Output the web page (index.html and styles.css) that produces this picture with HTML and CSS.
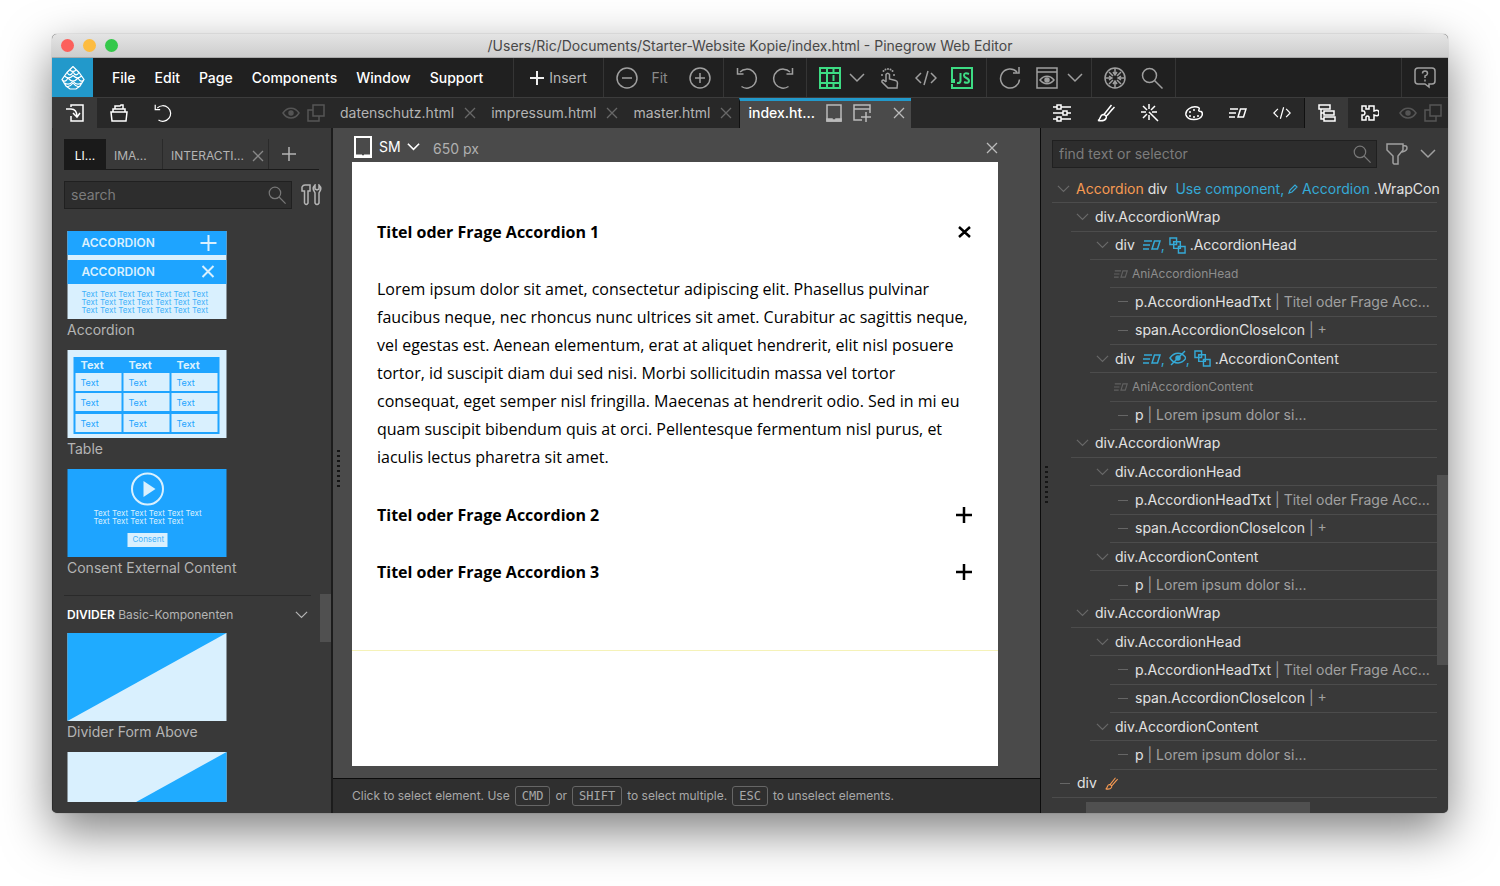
FILE: index.html
```html
<!DOCTYPE html>
<html lang="en">
<head>
<meta charset="utf-8">
<title>Pinegrow Web Editor</title>
<link rel="stylesheet" href="styles.css">
</head>
<body>
<svg class="sprite" aria-hidden="true">
  <symbol id="i-x" viewBox="0 0 12 12"><path d="M1 1l10 10M11 1L1 11"/></symbol>
  <symbol id="i-plus" viewBox="0 0 14 14"><path d="M7 0v14M0 7h14"/></symbol>
  <symbol id="i-chev" viewBox="0 0 16 10"><path d="M1 1l7 7 7-7"/></symbol>
  <symbol id="i-search" viewBox="0 0 22 22"><circle cx="8.500" cy="8.500" r="7"/><path d="M13.500 13.500l8 8"/></symbol>
  <symbol id="i-eye" viewBox="0 0 18 12"><path d="M1 6c4-6.500 12-6.500 16 0c-4 6.500-12 6.500-16 0z"/><circle cx="9" cy="6" r="2" fill="currentColor"/></symbol>
  <symbol id="i-copies" viewBox="0 0 18 18"><path d="M6 1h11v11H6zM6 6H1v11h11v-5"/></symbol>
  <symbol id="i-code" viewBox="0 0 22 16"><path d="M6 3L1 8l5 5M16 3l5 5-5 5M13 1L9 15"/></symbol>
  <symbol id="i-anim" viewBox="0 0 18 10"><path d="M1 1h8M0 5h7M0 9h6M11.500 1H17l-2.500 8H9z"/></symbol>
  <symbol id="i-cls" viewBox="0 0 18 18"><path d="M1 1h7v7H1zM5 5h7v7H5zM10 10h7v7h-7z"/></symbol>
  <symbol id="i-brush" viewBox="0 0 18 18"><path d="M1 16.500c3-1 1.500-5.500 5-6c2.500 0 4 2 3 4c-1.500 2.500-5 2.500-8 2zM7 10.500L14.500 1M9 12.500L17.500 3M10.500 11l5-6"/></symbol>
  <symbol id="i-undo" viewBox="0 0 22 22"><path d="M4 5a9.500 9.500 0 1 1 1.500 14.500M1.500 1v6h6"/></symbol>
</svg>

<div class="window">
  <header class="titlebar">
    <div class="lights"><i class="red"></i><i class="yellow"></i><i class="green"></i></div>
    <h1>/Users/Ric/Documents/Starter-Website Kopie/index.html - Pinegrow Web Editor</h1>
  </header>

  <div class="toolbar">
    <div class="logo"><svg class="s24" viewBox="0 0 24 24"><path d="M12 .500L6 6.500l-5 7L5 20l4 3h6l4-3 4-6.500-5-7zM9 4q3 3 6 0M6 6.500q3 5 6-.500q3 5.500 6 .500M3.500 10q4 4 8.500-.500q4.500 4.500 8.500.500M1 13.500q3 4 6-1.500q5 6 10 0q3 5.500 6 1.500M3.500 17q5 3 8.500-2q3.500 5 8.500 2M6 21q4-1 6-4q2 3 6 4"/></svg></div>
    <nav class="group menu">
      <button>File</button><button>Edit</button><button>Page</button><button>Components</button><button>Window</button><button>Support</button>
    </nav>
    <div class="group insert"><button><svg class="s14 thick"><use href="#i-plus"/></svg>Insert</button></div>
    <div class="group zoom">
      <button aria-label="Zoom out"><svg class="s22"><circle cx="11" cy="11" r="10"/><path d="M6 11h10"/></svg></button>
      <button class="fit">Fit</button>
      <button aria-label="Zoom in"><svg class="s22"><circle cx="11" cy="11" r="10"/><path d="M6 11h10M11 6v10"/></svg></button>
    </div>
    <div class="group history">
      <button aria-label="Undo"><svg class="s22"><use href="#i-undo"/></svg></button>
      <button aria-label="Redo"><svg class="s22"><path d="M18 5a9.500 9.500 0 1 0-1.500 14.500M20.500 1v6h-6"/></svg></button>
    </div>
    <div class="group view">
      <button class="accent" aria-label="Grid"><svg class="s22 thick"><path d="M1 1h20v20H1zM8 1v20M14.500 1v4M14.500 8v6M14.500 17v4M1 6h7M1 16h7M8 6h13M8 16h13"/></svg></button>
      <button class="more" aria-label="Grid options"><svg class="chev"><use href="#i-chev"/></svg></button>
      <button aria-label="Interact"><svg class="s22"><path d="M7 15V7.500q1.500-2.500 3.500 0V12l6 1.500q2 .500 2 2.500l-.500 5H9l-6-6q-.500-2 1.500-2L7 15"/><path class="dots" d="M9 2v.1M4.500 4v.1M13.500 4v.1M3 8v.1M15 8v.1M6.500 2.500v.1M11.500 2.500v.1"/></svg></button>
      <button aria-label="Code"><svg class="s22 code"><use href="#i-code"/></svg></button>
      <button class="accent" aria-label="JavaScript"><svg class="s22 thick"><path d="M1 12V1h20v20H1v-4M9.500 6v8q-.500 2.500-3.500 2M18 7q-5-2-5 1.500c0 3 5 2 5 5.500q-.500 3-5 1"/><rect x="0" y="12" width="4" height="4" fill="currentColor" stroke="none"/></svg></button>
    </div>
    <div class="group preview">
      <button aria-label="Reload"><svg class="s22"><path d="M18 5a9.500 9.500 0 1 0 2.500 7.500M20 0v6h-6"/></svg></button>
      <button aria-label="Preview"><svg class="s22"><path d="M1 1h20v20H1zM1 5h20M4 13c4-5 10-5 14 0c-4 5-10 5-14 0z"/><circle cx="11" cy="13" r="2" fill="currentColor"/></svg></button>
      <button class="more" aria-label="Preview options"><svg class="chev"><use href="#i-chev"/></svg></button>
    </div>
    <div class="group find">
      <button aria-label="Optimize"><svg class="s22"><circle cx="11" cy="11" r="10"/><path d="M11 1v7M11 14v7M1 11h7M14 11h7M9 5l2 3 2-3M9 17l2-3 2 3M5 9l3 2-3 2M17 9l-3 2 3 2M5 5l4 4M17 5l-4 4M5 17l4-4M17 17l-4-4"/></svg></button>
      <button aria-label="Find"><svg class="s22"><use href="#i-search"/></svg></button>
    </div>
    <div class="group help"><button aria-label="Help"><svg class="s22"><path d="M4 1h14q3 0 3 3v10q0 3-3 3h-3v3l-4-3H4q-3 0-3-3V4q0-3 3-3zM8.500 6.500q0-2.500 2.500-2.500t2.500 2.500q0 1.500-2.500 2.500v2M11 12.500v2"/></svg></button></div>
  </div>

  <div class="tabrow">
    <div class="paneltabs left">
      <button class="on" aria-label="Library"><svg class="s18"><path d="M5 3V1h12v16H5v-5M0 5h5q6 0 6 8M7 9l4 4 3-4"/></svg></button>
      <button aria-label="Project"><svg class="s18"><path d="M1 8h16l-1 9H2zM3 8V5h12v3M5 5V2h5l1-1h2v4"/></svg></button>
      <button aria-label="Undo history"><svg class="s18" viewBox="0 0 22 22"><use href="#i-undo"/></svg></button>
      <span class="ghost"><svg class="eye"><use href="#i-eye"/></svg><svg class="s18"><use href="#i-copies"/></svg></span>
    </div>
    <div class="filetabs">
      <div class="filetab"><button>datenschutz.html</button><button aria-label="Close"><svg class="s10"><use href="#i-x" /></svg></button></div>
      <div class="filetab"><button>impressum.html</button><button aria-label="Close"><svg class="s10"><use href="#i-x"/></svg></button></div>
      <div class="filetab"><button>master.html</button><button aria-label="Close"><svg class="s10"><use href="#i-x"/></svg></button></div>
      <div class="filetab current"><button>index.ht...</button>
        <button class="device" aria-label="Device"><svg class="s18"><path d="M2 1h14v16H2z"/><path d="M2 15h5v1h4v-1h5v2H2z" fill="currentColor"/></svg></button>
        <button aria-label="New window"><svg class="s18"><path d="M9 16H1V1h16v8M1 5h16M13 8v10M8 13h10"/></svg></button>
        <button class="end" aria-label="Close"><svg class="s10"><use href="#i-x"/></svg></button></div>
    </div>
    <div class="paneltabs right">
      <button aria-label="Properties"><svg class="s18"><path d="M0 3h4M8 3h10M4 1h4v4H4zM0 9h10M14 9h4M10 7h4v4h-4zM0 15h4M8 15h10M4 13h4v4H4z"/></svg></button>
      <button aria-label="Styles"><svg class="s18"><use href="#i-brush"/></svg></button>
      <button aria-label="Visual"><svg class="s18"><path d="M8 8l9 9M8 0v5M8 11v5M0 8h5M11 8h5M2 2l4 4M14 2l-4 4M2 14l4-4"/></svg></button>
      <button aria-label="Colors"><svg class="s18"><path d="M1 11c-1-5 5-9 11-8q3 .500 2 2.500q-1 2 2 2q2 1 1 4c-2 5-14 6-16-.500z"/><path class="dots" d="M5 8v.1M9 6v.1M5 12v.1M9 13v.1M13 12v.1"/></svg></button>
      <button aria-label="Interactions"><svg class="anim"><use href="#i-anim"/></svg></button>
      <button aria-label="Code"><svg class="s18" viewBox="0 -3 22 22"><use href="#i-code" width="22" height="16"/></svg></button>
      <button class="on" aria-label="Tree"><svg class="s18"><path d="M1 1h11v4H1zM6 7h10v4H6zM6 13h11v4H6zM3 5v10h3M3 9h3"/></svg></button>
      <button aria-label="Components"><svg class="s18"><path d="M1 2h4v3h3V2h5v5q5-2 5 2t-5 2v5H8v-3q-1.500-2-3 0v3H1v-5h2q2-2 0-4H1z"/></svg></button>
      <span class="ghost"><svg class="eye"><use href="#i-eye"/></svg><svg class="s18"><use href="#i-copies"/></svg></span>
    </div>
  </div>

  <main class="work">
    <aside class="library">
      <div class="libtabs">
        <button class="on">LI...</button><button class="ima">IMA...</button><button class="inter">INTERACTI...</button><button class="shut" aria-label="Close"><svg class="s10"><use href="#i-x"/></svg></button><button class="add" aria-label="Add"><svg class="s14"><use href="#i-plus"/></svg></button>
      </div>
      <div class="searchrow">
        <label class="field"><input type="text" placeholder="search" aria-label="Search library"><svg class="s18" viewBox="0 0 22 22"><use href="#i-search"/></svg></label>
        <button aria-label="Tools"><svg class="s22"><path d="M3 7H1V3q1-2 3-2h5v6H7v12q-2 3-3.500 0V7zM14 1q-3 3-1 6l1 2v10q2 3 4 0V9l1-2q2-3-1-6v4l-2 1-2-1z"/></svg></button>
      </div>
      <div class="scroller">
        <figure>
          <svg class="thumb" viewBox="0 0 159 88"><rect width="159" height="88" fill="#d9f0fe"/><path d="M0 0h159v24H0zM0 29h159v24H0z" fill="#1ea4ff"/><path class="ink" d="M141 4v16M133 12h16M135 35l11 11M146 35l-11 11"/>
            <g class="thead caps"><text x="14" y="16">ACCORDION</text><text x="14" y="45">ACCORDION</text></g>
            <g class="tiny"><text x="14" y="66">Text Text Text Text Text Text Text</text><text x="14" y="74">Text Text Text Text Text Text Text</text><text x="14" y="82">Text Text Text Text Text Text Text</text></g></svg>
          <figcaption>Accordion</figcaption>
        </figure>
        <figure>
          <svg class="thumb" viewBox="0 0 159 88"><rect width="159" height="88" fill="#d9f0fe"/><path d="M6 7h146v77H6z" fill="#1ea4ff"/><path d="M8 23h46v18H8zM56 23h46v18H56zM104 23h46v18h-46zM8 43h46v18H8zM56 43h46v18H56zM104 43h46v18h-46zM8 64h46v18H8zM56 64h46v18H56zM104 64h46v18h-46z" fill="#d9f0fe"/>
            <g class="thead"><text x="13" y="19">Text</text><text x="61" y="19">Text</text><text x="109" y="19">Text</text></g>
            <g class="cell"><text x="13" y="36">Text</text><text x="61" y="36">Text</text><text x="109" y="36">Text</text><text x="13" y="56">Text</text><text x="61" y="56">Text</text><text x="109" y="56">Text</text><text x="13" y="77">Text</text><text x="61" y="77">Text</text><text x="109" y="77">Text</text></g></svg>
          <figcaption>Table</figcaption>
        </figure>
        <figure>
          <svg class="thumb" viewBox="0 0 159 88"><rect width="159" height="88" fill="#1ea4ff"/><circle class="ink" cx="80" cy="20" r="15.500"/><path d="M76 12l12 8-12 8z" fill="#d9f0fe"/><rect x="60" y="64" width="40" height="14" fill="#d9f0fe"/>
            <g class="tiny light"><text x="26" y="47">Text Text Text Text Text Text</text><text x="26" y="55">Text Text Text Text Text</text></g><g class="tiny"><text x="65" y="73">Consent</text></g></svg>
          <figcaption>Consent External Content</figcaption>
        </figure>
        <div class="section"><h2><b>DIVIDER</b> Basic-Komponenten</h2><button aria-label="Collapse"><svg class="chev sm"><use href="#i-chev"/></svg></button></div>
        <figure>
          <svg class="thumb" viewBox="0 0 159 88"><rect width="159" height="88" fill="#d9f0fe"/><path d="M0 0h159L0 88z" fill="#1fabff"/></svg>
          <figcaption>Divider Form Above</figcaption>
        </figure>
        <figure>
          <svg class="thumb" viewBox="0 0 159 88"><rect width="159" height="88" fill="#d9f0fe"/><path d="M159 0v88H0z" fill="#1fabff"/></svg>
        </figure>
      </div>
      <i class="vbar"></i>
    </aside>

    <section class="stage">
      <div class="stagehead">
        <svg class="tablet"><path d="M1 1h16v20H1z"/><path d="M1 19h7v1h2v-1h7v2H1z" fill="currentColor" stroke-width="1"/></svg>
        <label class="size"><select aria-label="Breakpoint"><option>SM</option></select><svg class="chev sm thick"><use href="#i-chev"/></svg></label>
        <span class="px">650 px</span>
        <button aria-label="Close preview"><svg class="s10"><use href="#i-x"/></svg></button>
      </div>
      <article class="page">
        <div class="accordion">
          <button class="head">Titel oder Frage Accordion 1<svg class="toggle"><path d="M3 3l11 10M14 3L3 13"/></svg></button>
          <p>Lorem ipsum dolor sit amet, consectetur adipiscing elit. Phasellus pulvinar faucibus neque, nec rhoncus nunc ultrices sit amet. Curabitur ac sagittis neque, vel egestas est. Aenean elementum, erat at aliquet hendrerit, elit nisl posuere tortor, id suscipit diam dui sed nisi. Morbi sollicitudin massa vel tortor consequat, eget semper nisl fringilla. Maecenas at hendrerit odio. Sed in mi eu quam suscipit bibendum quis at orci. Pellentesque fermentum nisl purus, et iaculis lectus pharetra sit amet.</p>
          <button class="head">Titel oder Frage Accordion 2<svg class="toggle"><path d="M8 0v16M0 8h16"/></svg></button>
          <button class="head">Titel oder Frage Accordion 3<svg class="toggle"><path d="M8 0v16M0 8h16"/></svg></button>
        </div>
      </article>
      <footer class="status">Click to select element. Use <kbd>CMD</kbd> or <kbd>SHIFT</kbd> to select multiple. <kbd>ESC</kbd> to unselect elements.</footer>
      <i class="grip"></i>
    </section>

    <aside class="tree">
      <div class="searchrow">
        <label class="field"><input type="text" placeholder="find text or selector" aria-label="Find text or selector"><svg class="s18" viewBox="0 0 22 22"><use href="#i-search"/></svg></label>
        <button aria-label="Filter"><svg class="s22"><path d="M1 1h16v6l-5 6v8H8l-1-1v-7L1 7zM17 3q4-1 4 2t-5 4"/></svg></button>
        <button aria-label="More"><svg class="chev"><use href="#i-chev"/></svg></button>
      </div>
      <ul class="nodes">
        <li class="l0"><svg class="tog"><use href="#i-chev"/></svg><span class="orange">Accordion</span>&nbsp;div&nbsp; <span class="blue">Use component, <svg class="pencil"><path d="M1 9l1-3 5-5 2 2-5 5z"/></svg> Accordion</span>&nbsp;.WrapCon</li>
        <li class="l1"><svg class="tog"><use href="#i-chev"/></svg>div.AccordionWrap</li>
        <li class="l2"><svg class="tog"><use href="#i-chev"/></svg>div&nbsp; <span class="blue"><svg class="anim"><use href="#i-anim"/></svg>, <svg class="cls"><use href="#i-cls"/></svg></span>&nbsp;.AccordionHead</li>
        <li class="l3 ani"><svg class="anim"><use href="#i-anim"/></svg>AniAccordionHead</li>
        <li class="l3"><i class="dash"></i>p.AccordionHeadTxt<span class="dim">&nbsp;| Titel oder Frage Acc...</span></li>
        <li class="l3"><i class="dash"></i>span.AccordionCloseIcon<span class="dim">&nbsp;| +</span></li>
        <li class="l2"><svg class="tog"><use href="#i-chev"/></svg>div&nbsp; <span class="blue"><svg class="anim"><use href="#i-anim"/></svg>, <svg class="eyeoff"><use href="#i-eye" y="2" width="18" height="12"/><path d="M2 15L16 1"/></svg>, <svg class="cls"><use href="#i-cls"/></svg></span>&nbsp;.AccordionContent</li>
        <li class="l3 ani"><svg class="anim"><use href="#i-anim"/></svg>AniAccordionContent</li>
        <li class="l3"><i class="dash"></i>p<span class="dim">&nbsp;| Lorem ipsum dolor si...</span></li>
        <li class="l1"><svg class="tog"><use href="#i-chev"/></svg>div.AccordionWrap</li>
        <li class="l2"><svg class="tog"><use href="#i-chev"/></svg>div.AccordionHead</li>
        <li class="l3"><i class="dash"></i>p.AccordionHeadTxt<span class="dim">&nbsp;| Titel oder Frage Acc...</span></li>
        <li class="l3"><i class="dash"></i>span.AccordionCloseIcon<span class="dim">&nbsp;| +</span></li>
        <li class="l2"><svg class="tog"><use href="#i-chev"/></svg>div.AccordionContent</li>
        <li class="l3"><i class="dash"></i>p<span class="dim">&nbsp;| Lorem ipsum dolor si...</span></li>
        <li class="l1"><svg class="tog"><use href="#i-chev"/></svg>div.AccordionWrap</li>
        <li class="l2"><svg class="tog"><use href="#i-chev"/></svg>div.AccordionHead</li>
        <li class="l3"><i class="dash"></i>p.AccordionHeadTxt<span class="dim">&nbsp;| Titel oder Frage Acc...</span></li>
        <li class="l3"><i class="dash"></i>span.AccordionCloseIcon<span class="dim">&nbsp;| +</span></li>
        <li class="l2"><svg class="tog"><use href="#i-chev"/></svg>div.AccordionContent</li>
        <li class="l3"><i class="dash"></i>p<span class="dim">&nbsp;| Lorem ipsum dolor si...</span></li>
        <li class="l0"><i class="dash"></i>div&nbsp; <svg class="mini orange" viewBox="0 0 18 18"><use href="#i-brush"/></svg></li>
      </ul>
      <i class="hbar"></i>
      <i class="vbar"></i>
      <i class="grip"></i>
    </aside>
  </main>
</div>
</body>
</html>
```
FILE: styles.css
```css
* { box-sizing: border-box; }
body {
  margin: 0;
  height: 100vh;
  padding: 34px 52px 73px;
  display: flex;
  background: #fff;
  font: 14px/20px Inter, "Liberation Sans", sans-serif;
  color: #b4b4b4;
}
button, input, select { font: inherit; color: inherit; background: none; border: 0; padding: 0; margin: 0; }
button { display: flex; align-items: center; white-space: nowrap; }
svg { display: block; flex: none; fill: none; stroke: currentColor; stroke-width: 1.5; }
.sprite { position: absolute; width: 0; height: 0; }
.thick { stroke-width: 2; }
.dots { stroke-width: 2; stroke-linecap: round; }
.s10 { width: 12px; height: 12px; stroke-width: 1.3; }
.s14 { width: 14px; height: 14px; }
.s18 { width: 18px; height: 18px; }
.s22 { width: 22px; height: 22px; }
.s24 { width: 24px; height: 24px; }
.chev { width: 16px; height: 10px; }
.chev.sm { width: 13px; height: 8px; }
.eye { width: 18px; height: 12px; }
.anim { width: 18px; height: 10px; }

.window {
  flex: 1;
  min-width: 0;
  display: flex;
  flex-direction: column;
  border-radius: 5px;
  overflow: hidden;
  background: #393939;
  box-shadow: 0 0 1px rgba(0,0,0,.5), 0 18px 48px rgba(0,0,0,.5);
}
.titlebar {
  display: grid;
  grid-template-columns: 1fr auto 1fr;
  align-items: center;
  height: 24px;
  padding: 0 9px;
  background: linear-gradient(#e4e4e4, #cdcdcd);
  border-bottom: 1px solid #aaa;
}
.titlebar h1 { margin: 0; font-size: 14px; font-weight: 400; color: #484848; }
.lights { display: flex; gap: 9px; }
.lights i { width: 13px; height: 13px; border-radius: 50%; }
.red { background: #fc605c; }
.yellow { background: #fdbc40; }
.green { background: #34c84a; }

.toolbar { display: flex; height: 40px; background: #202020; border-bottom: 1px solid #3c3c3c; }
.logo { width: 41px; background: #2299cb; color: #fff; display: grid; place-items: center; }
.logo svg { stroke-width: 1.2; }
.group { display: flex; align-items: center; padding: 0 12px; border-right: 1px solid #353535; color: #9f9f9f; }
.menu { width: 421px; padding: 0 19px; gap: 19px; color: #fff; font-weight: 500; }
.insert { width: 90px; justify-content: center; color: #b8b8b8; }
.insert button { gap: 5px; }
.insert svg { color: #eee; }
.zoom { width: 120px; justify-content: space-between; }
.fit { color: #8a8a8a; margin-right: 8px; }
.history { width: 83px; gap: 14px; }
.view { width: 180px; gap: 14px; }
.preview, .find { gap: 15px; }
.preview { width: 105px; }
.find { width: 84px; }
.more { margin-left: -6px; }
.help { margin-left: auto; border-left: 1px solid #353535; border-right: 0; }
.accent { color: #3ddc84; }
.code { padding: 3px 0; }

.tabrow { display: flex; height: 30px; background: #282828; }
.paneltabs { display: flex; color: #fff; }
.paneltabs button { width: 44px; justify-content: center; }
.paneltabs .on { background: #393939; }
.ghost { display: flex; align-items: center; gap: 7px; margin-left: auto; color: #555; }
.left { width: 280px; }
.left button.on { width: 45px; }
.left .ghost { padding-right: 7px; }
.right { width: 408px; }
.right .on { border-left: 1px solid #111; }
.right .ghost { padding-right: 6px; }
.filetabs { flex: 1; min-width: 0; display: flex; padding-left: 8px; gap: 15px; }
.filetab { display: flex; align-items: center; gap: 10px; }
.filetab svg.s10 { color: #686868; }
.current { flex: 0 0 172px; margin-left: -8px; padding: 0 6px 3px 8px; border-top: 3px solid #2299cb; border-left: 1px solid #111; background: #4a4a4a; color: #fff; font-weight: 500; }
.current button + button { color: #bbb; }
.current button.end svg { color: #bbb; }
.end { margin-left: auto; }

.work { flex: 1; min-height: 0; display: flex; }
.library { position: relative; width: 281px; display: flex; flex-direction: column; padding: 11px 12px 11px 11px; border-right: 2px solid #1c1c1c; border-left: 1px solid #2c2c2c; }
.libtabs { display: flex; height: 31px; border-bottom: 1px solid #1a1a1a; font-size: 12px; }
.libtabs button { padding-top: 4px; }
.libtabs .on { width: 42px; justify-content: center; background: #1a1a1a; color: #fff; }
.libtabs .ima { width: 57px; padding-left: 8px; border-right: 1px solid #2a2a2a; }
.libtabs .inter { width: 84px; padding-left: 8px; }
.shut { width: 22px; justify-content: center; color: #888; border-right: 1px solid #2a2a2a; }
.libtabs .add { width: 40px; padding: 0; justify-content: center; }
.searchrow { display: flex; align-items: center; gap: 9px; height: 28px; }
.library .searchrow { margin: 11px -4px 22px 0; }
.field { flex: 1; min-width: 0; display: flex; align-items: center; height: 28px; padding: 0 5px 0 6px; background: #2d2d2d; border: 1px solid #202020; color: #777; }
.field input { flex: 1; min-width: 0; outline: 0; }
.field input::placeholder { color: #7c7c7c; opacity: 1; }
.scroller { flex: 1; min-height: 0; overflow: hidden; padding-left: 3px; }
figure { margin: 0 0 10px; }
.thumb { width: 160px; height: 88px; stroke: none; }
.thumb text { font-family: Inter, sans-serif; }
figcaption { height: 21px; line-height: 21px; }
.ink { stroke: #d9f0fe; stroke-width: 2; }
.thead { fill: #d9f0fe; font-size: 11px; font-weight: 700; }
.caps { font-size: 12px; font-weight: 600; }
.cell { fill: #1ea4ff; font-size: 9px; }
.tiny { fill: #3fb0fa; font-size: 8px; }
.light { fill: #d9f0fe; }
.section { display: flex; justify-content: space-between; align-items: center; margin: 17px 8px 0 -3px; padding: 0 3px; height: 38px; border-top: 1px solid #2a2a2a; }
.section h2 { margin: 0; font-size: 12px; font-weight: 400; }
.section b { color: #fff; font-weight: 600; }
.library .vbar { position: absolute; right: 0; top: 68%; width: 11px; height: 48px; background: #505050; }

.stage { position: relative; flex: 1; min-width: 0; display: flex; flex-direction: column; background: #4a4a4a; }
.stagehead { display: flex; align-items: center; height: 34px; padding: 3px 42px 0 21px; color: #fff; }
.tablet { width: 18px; height: 22px; stroke-width: 2; }
.size { display: flex; align-items: center; margin-left: 7px; }
.size select { appearance: none; width: 28px; outline: 0; }
.px { margin-left: 13px; padding-top: 4px; color: #b0b0b0; }
.stagehead button { margin-left: auto; padding-top: 3px; color: #bbb; }
.page { flex: 1; min-height: 0; margin: 0 42px 12px 19px; background: #fff; color: #000; font: 16px/28px "Open Sans", sans-serif; }
.accordion { display: flex; flex-direction: column; gap: 29px; padding: 56px 25px 64px; border-bottom: 1px solid #f5f2b8; }
.accordion p { margin: 0 0 1px; }
.head { justify-content: space-between; font-weight: 700; }
.toggle { width: 17px; height: 16px; stroke-width: 2.5; }
.status { display: flex; align-items: center; gap: 5px; height: 35px; padding-left: 19px; background: #2f2f2f; border-top: 1px solid #0c0c0c; font-size: 12px; color: #a8a8a8; white-space: nowrap; }
kbd { padding: 0 6px; border: 1px solid #666; border-radius: 3px; font: 12px/18px "DejaVu Sans Mono", monospace; }
.grip { position: absolute; left: 4px; top: 47%; width: 3px; height: 38px; background: repeating-linear-gradient(#151515 0 2px, transparent 2px 5px); }

.tree { position: relative; width: 408px; display: flex; flex-direction: column; padding: 12px 11px 0 11px; border-left: 1px solid #0c0c0c; color: #e2e2e2; }
.tree .searchrow { margin: 0 0 7px; padding-right: 1px; color: #a0a0a0; }
.tree .chev { margin-left: 3px; }
.nodes { flex: 1; min-height: 0; margin: 0; padding: 0; list-style: none; display: flex; flex-direction: column; }
.nodes li { flex: 1; display: flex; align-items: center; border-bottom: 1px solid #4c4c4c; white-space: pre; }
.l1 { margin-left: 19px; }
.l2 { margin-left: 38px; }
.l3 { margin-left: 58px; }
.nodes span { display: flex; align-items: center; }
.tog { width: 13px; height: 8px; margin: 0 6px 0 5px; color: #686868; }
.l2 .tog { margin: 0 6px; }
.dash { width: 10px; height: 1px; margin: 0 7px 0 8px; background: #666; }
.ani { color: #8d8d8d; font-size: 12px; }
.ani .anim { width: 14px; height: 8px; margin: 0 4px; color: #606060; }
.orange { color: #f79a52; }
.blue { color: #35a9d6; }
.dim { color: #a0a0a0; }
.cls, .eyeoff { width: 17px; height: 17px; }
.pencil { width: 10px; height: 10px; stroke-width: 1.2; }
.mini { width: 13px; height: 13px; }
.hbar { width: 224px; height: 11px; margin: 4px 0 0 34px; background: #505050; }
.tree .vbar { position: absolute; right: 0; top: 347px; width: 11px; height: 190px; background: #505050; }
.tree .grip { top: 338px; }
```
